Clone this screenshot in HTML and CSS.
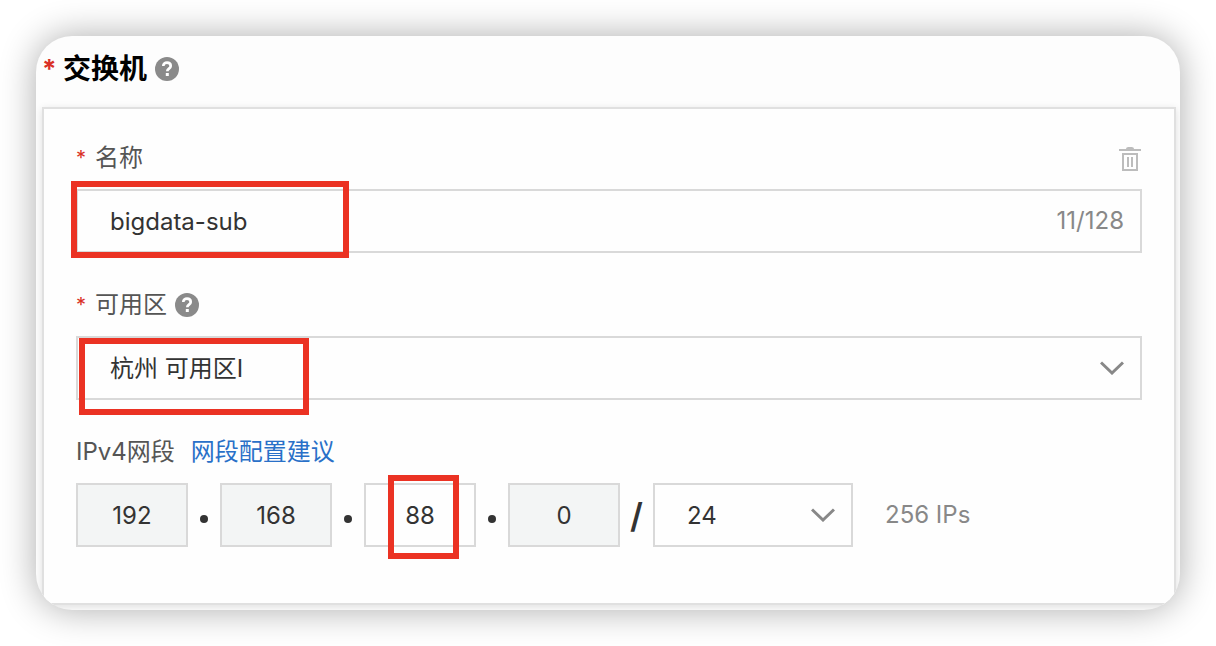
FILE: index.html
```html
<!DOCTYPE html>
<html lang="zh-CN">
<head>
<meta charset="utf-8">
<title>交换机</title>
<link rel="stylesheet" href="styles.css">
</head>
<body>
<main class="card">
  <header class="card-header">
    <span class="required required-lg">*</span>
    <h1 class="title">交换机</h1>
    <svg class="help" viewBox="0 0 24 24" aria-hidden="true"><circle cx="12" cy="12" r="12" fill="#8a8a8a"/><path d="M8.3 9.1C8.3 6.9 9.9 5.7 12 5.7s3.7 1.2 3.7 3.2c0 2.700-3.400 2.700-3.400 5.300" fill="none" stroke="#fff" stroke-width="2.700"/><rect x="10.800" y="16" width="3" height="3" fill="#fff"/></svg>
  </header>
  <form class="panel">
    <div class="group">
      <div class="label-row">
        <span class="required">*</span>
        <label for="name">名称</label>
        <button class="delete" type="button" aria-label="删除">
          <svg viewBox="0 0 22 24" aria-hidden="true"><path d="M0 3h22" stroke="#bcbcbc" stroke-width="2"/><path d="M7 2.200C7 .8 8 0 9.300 0h3.400C14 0 15 .8 15 2.200z" fill="#bcbcbc"/><path d="M4 7h14v16H4zM9 10v10M13 10v10" fill="none" stroke="#bcbcbc" stroke-width="2"/></svg>
        </button>
      </div>
      <div class="field">
        <input class="control" id="name" type="text" value="bigdata-sub" maxlength="128">
        <span class="counter">11/128</span>
        <span class="mark mark-name"></span>
      </div>
    </div>
    <div class="group">
      <div class="label-row">
        <span class="required">*</span>
        <label for="zone">可用区</label>
        <svg class="help" viewBox="0 0 24 24" aria-hidden="true"><circle cx="12" cy="12" r="12" fill="#8a8a8a"/><path d="M8.3 9.1C8.3 6.9 9.9 5.7 12 5.7s3.7 1.2 3.7 3.2c0 2.700-3.400 2.700-3.400 5.300" fill="none" stroke="#fff" stroke-width="2.700"/><rect x="10.800" y="16" width="3" height="3" fill="#fff"/></svg>
      </div>
      <div class="field">
        <select class="control" id="zone"><option>杭州 可用区I</option></select>
        <svg class="chevron" viewBox="0 0 24 14" aria-hidden="true"><path d="M1 1.500l11 10.500L23 1.500" fill="none" stroke="#888" stroke-width="3"/></svg>
        <span class="mark mark-zone"></span>
      </div>
    </div>
    <div class="group">
      <div class="label-row">
        <label for="octet3">IPv4网段</label>
        <a class="link" href="#">网段配置建议</a>
      </div>
      <div class="cidr">
        <input class="control octet" type="text" value="192" aria-label="第一段" disabled>
        <span class="dot"></span>
        <input class="control octet" type="text" value="168" aria-label="第二段" disabled>
        <span class="dot"></span>
        <div class="octet-wrap">
          <input class="control octet" id="octet3" type="text" value="88">
          <span class="mark mark-octet"></span>
        </div>
        <span class="dot"></span>
        <input class="control octet" type="text" value="0" aria-label="第四段" disabled>
        <span class="slash">/</span>
        <div class="field prefix">
          <select class="control" aria-label="掩码"><option>24</option></select>
          <svg class="chevron" viewBox="0 0 24 14" aria-hidden="true"><path d="M1 1.500l11 10.500L23 1.500" fill="none" stroke="#888" stroke-width="3"/></svg>
        </div>
        <span class="count">256 IPs</span>
      </div>
    </div>
  </form>
</main>
</body>
</html>
```
FILE: styles.css
```css
* { box-sizing: border-box; }

body {
  margin: 0;
  padding: 36px;
  background: #fff;
  color: #333;
  font-family: Inter, "Noto Sans CJK SC", sans-serif;
  font-size: 24px;
  line-height: 34px;
}

.card {
  padding: 0 4px 5px 6px;
  overflow: hidden;
  border-radius: 36px;
  background: #fdfdfd;
  box-shadow: 0 0 36px rgba(0, 0, 0, 0.33);
}

.card-header {
  display: flex;
  align-items: center;
  height: 71px;
  padding-bottom: 5px;
}

.required {
  width: 19px;
  color: #d93026;
  font-size: 20px;
}

.required-lg {
  width: 21px;
  font-size: 26px;
  font-weight: 700;
}

.title {
  margin: 0;
  color: #000;
  font-size: 28px;
  font-weight: 600;
}

.help {
  width: 24px;
  height: 24px;
  margin-left: 8px;
}

.panel {
  display: flex;
  flex-direction: column;
  gap: 35px;
  padding: 32px 32px 56px;
  border: 2px solid #e0e0e0;
  background: #fefefe;
  box-shadow: 0 2px 8px rgba(0, 0, 0, 0.12);
}

.group {
  display: flex;
  flex-direction: column;
  gap: 14px;
}

.label-row {
  display: flex;
  align-items: center;
  height: 34px;
  color: #555;
}

.delete {
  display: flex;
  margin-left: auto;
  padding: 2px 1px 0;
  border: 0;
  background: none;
}

.delete svg {
  width: 22px;
  height: 24px;
}

.field,
.octet-wrap {
  position: relative;
}

.control {
  display: block;
  width: 100%;
  height: 64px;
  margin: 0;
  padding: 0 32px;
  appearance: none;
  border: 2px solid #d9d9d9;
  border-radius: 0;
  outline: 0;
  background: #fefefe;
  color: #333;
  font: inherit;
}

select.control {
  padding-top: 2px;
}

.counter {
  position: absolute;
  top: 15px;
  right: 18px;
  color: #888;
}

.chevron {
  position: absolute;
  top: 25px;
  right: 18px;
  width: 24px;
  height: 14px;
  pointer-events: none;
}

.link {
  margin-left: 16px;
  color: #2970c8;
  text-decoration: none;
}

.cidr {
  display: flex;
  align-items: center;
}

.octet {
  width: 112px;
  padding: 0;
  text-align: center;
}

.octet:disabled {
  background: #f3f5f5;
}

.dot {
  width: 8px;
  height: 8px;
  margin: 8px 12px 0;
  border-radius: 50%;
  background: #333;
}

.slash {
  width: 33px;
  padding-top: 2px;
  font-size: 34px;
  font-weight: 600;
  text-align: center;
}

.prefix {
  width: 200px;
}

.count {
  margin-left: 32px;
  color: #888;
}

.mark {
  position: absolute;
  border: 6px solid #eb3223;
  pointer-events: none;
}

.mark-name {
  top: -8px;
  left: -5px;
  width: 278px;
  height: 77px;
}

.mark-zone {
  top: 2px;
  left: 3px;
  width: 230px;
  height: 77px;
}

.mark-octet {
  top: -8px;
  left: 24px;
  width: 71px;
  height: 84px;
}
```
